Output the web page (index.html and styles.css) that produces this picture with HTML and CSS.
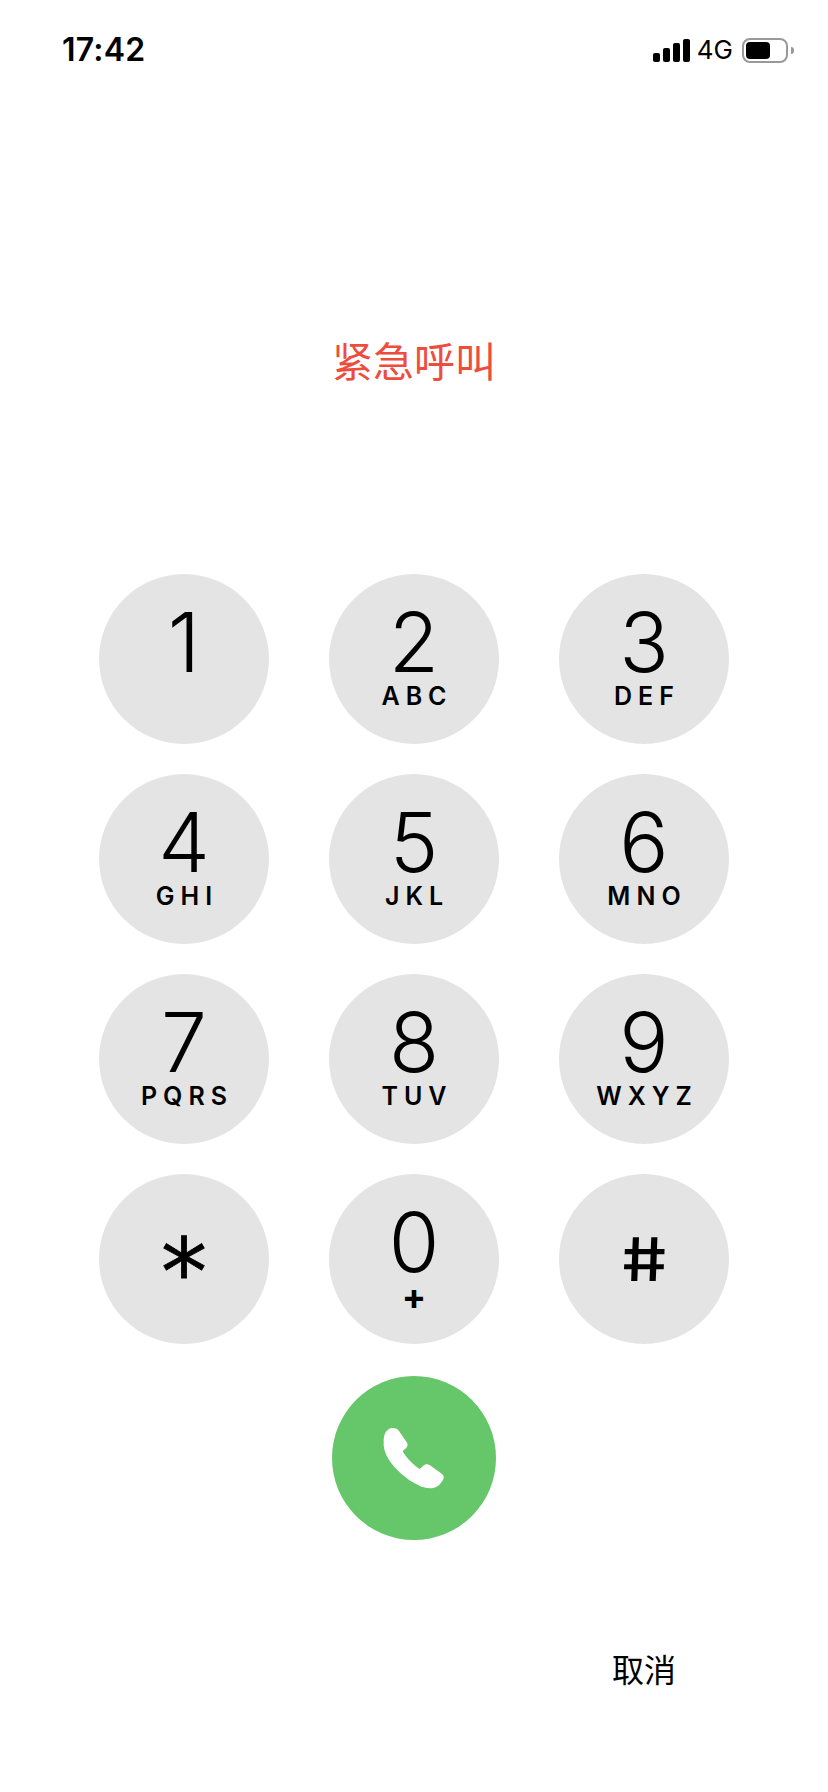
FILE: index.html
```html
<!DOCTYPE html>
<html lang="zh-CN">
<head>
<meta charset="UTF-8">
<meta name="viewport" content="width=device-width, initial-scale=1.0">
<title>紧急呼叫</title>
<link rel="stylesheet" href="styles.css">
</head>
<body>

<div class="status-bar">
  <span class="time">17:42</span>
  <div class="status-right">
    <div class="signal">
      <span class="bar bar-1"></span>
      <span class="bar bar-2"></span>
      <span class="bar bar-3"></span>
      <span class="bar bar-4"></span>
    </div>
    <span class="network">4G</span>
    <div class="battery"><span class="battery-level"></span></div>
    <span class="battery-cap"></span>
  </div>
</div>

<h1 class="title">紧急呼叫</h1>

<div class="keypad">
  <button class="key"><span class="digit">1</span></button>
  <button class="key"><span class="digit">2</span><span class="letters">ABC</span></button>
  <button class="key"><span class="digit">3</span><span class="letters">DEF</span></button>
  <button class="key"><span class="digit">4</span><span class="letters">GHI</span></button>
  <button class="key"><span class="digit">5</span><span class="letters">JKL</span></button>
  <button class="key"><span class="digit">6</span><span class="letters">MNO</span></button>
  <button class="key"><span class="digit">7</span><span class="letters">PQRS</span></button>
  <button class="key"><span class="digit">8</span><span class="letters">TUV</span></button>
  <button class="key"><span class="digit">9</span><span class="letters">WXYZ</span></button>
  <button class="key key-symbol"><span class="star">*</span></button>
  <button class="key"><span class="digit">0</span><span class="plus">+</span></button>
  <button class="key key-symbol"><span class="hash">#</span></button>
</div>

<div class="call-row">
  <button class="call">
    <svg class="call-icon" viewBox="190 200 186 186" width="62" height="62">
      <path fill="#fff" d="M205 208C218 200 232 203 238 212L262 247C266 254 262 261 257 265L249 272C256 288 283 316 300 326L310 317C316 311 324 310 331 315L366 340C374 346 374 354 368 362C358 378 345 384 330 384C300 382 262 358 232 328C205 300 190 272 192 245C192 228 195 215 205 208Z"/>
    </svg>
  </button>
</div>

<div class="footer">
  <span class="cancel">取消</span>
</div>

</body>
</html>
```

FILE: styles.css
```css
body {
  font-family: 'Inter', 'Noto Sans CJK SC', sans-serif;
  margin: 0;
  background-color: #fff;
  color: #000;
}

.status-bar {
  height: 100px;
  padding: 30px 34px 0 62px;
  box-sizing: border-box;
  display: flex;
  justify-content: space-between;
  align-items: flex-start;
}

.time {
  font-size: 32px;
  font-weight: 600;
  line-height: 40px;
  letter-spacing: 0.2px;
}

.status-right {
  display: flex;
  align-items: center;
  height: 40px;
}

.signal {
  display: flex;
  align-items: flex-end;
  gap: 3px;
  height: 23px;
}

.bar {
  width: 7px;
  background-color: #000;
  border-radius: 2px;
}

.bar-1 { height: 9px; }
.bar-2 { height: 14px; }
.bar-3 { height: 19px; }
.bar-4 { height: 23px; }

.network {
  font-size: 26px;
  margin-left: 7px;
  line-height: 40px;
}

.battery {
  width: 46px;
  height: 25px;
  margin-left: 9px;
  padding: 2px;
  box-sizing: border-box;
  border: 2px solid #999;
  border-radius: 8px;
}

.battery-level {
  display: block;
  width: 24px;
  height: 100%;
  background-color: #000;
  border-radius: 4px;
}

.battery-cap {
  width: 3px;
  height: 7px;
  margin-left: 3px;
  background-color: #999;
  border-radius: 0 4px 4px 0;
}

.title {
  margin: 237px 0 187px;
  text-align: center;
  font-size: 41px;
  font-weight: 400;
  line-height: 50px;
  color: #ee4d3e;
}

.keypad {
  display: grid;
  grid-template-columns: repeat(3, 170px);
  gap: 30px 60px;
  justify-content: center;
}

.key {
  width: 170px;
  height: 170px;
  padding: 29px 0 0;
  border: none;
  border-radius: 50%;
  background-color: #e4e4e4;
  color: #000;
  font-family: inherit;
  display: flex;
  flex-direction: column;
  align-items: center;
}

.digit {
  font-size: 82px;
  font-weight: 350;
  line-height: 80px;
}

.letters {
  font-size: 25px;
  font-weight: 600;
  line-height: 24px;
  letter-spacing: 6px;
  padding-left: 6px;
  margin-top: 1px;
}

.plus {
  font-size: 36px;
  font-weight: 700;
  line-height: 24px;
  margin-top: 1px;
}

.key-symbol {
  padding: 0;
  justify-content: center;
}

.star {
  font-family: 'DejaVu Sans', sans-serif;
  font-size: 92px;
  line-height: 90px;
  margin-top: 30px;
  -webkit-text-stroke: 0.8px #000;
}

/* the keypad hash stands upright, the font's one leans */
.hash {
  font-size: 60px;
  font-weight: 500;
  line-height: 60px;
  transform: skewX(9deg) scaleX(1.2);
}

.call-row {
  display: flex;
  justify-content: center;
  margin-top: 32px;
}

.call {
  width: 164px;
  height: 164px;
  padding: 0;
  border: none;
  border-radius: 50%;
  background-color: #66c66a;
  display: flex;
  align-items: center;
  justify-content: center;
}

.footer {
  display: grid;
  grid-template-columns: repeat(3, 170px);
  column-gap: 60px;
  justify-content: center;
  margin-top: 111px;
}

.cancel {
  grid-column: 3;
  text-align: center;
  font-size: 32px;
  line-height: 40px;
}
```
